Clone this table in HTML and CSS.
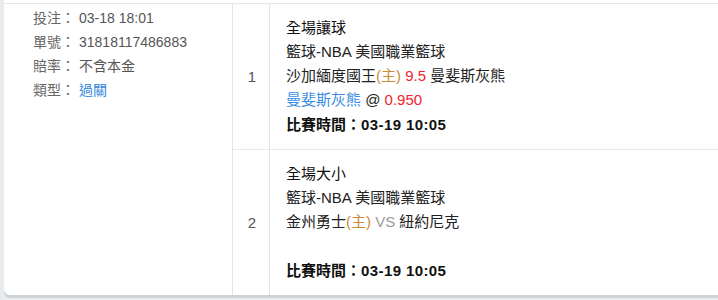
FILE: index.html
```html
<!DOCTYPE html>
<html lang="zh-Hant">
<head>
<meta charset="utf-8">
<link rel="stylesheet" href="styles.css">
</head>
<body>
<div class="card">
  <div class="inner">
    <div class="info">
      <div class="info-row"><span class="label">投注：</span><span class="value">03-18 18:01</span></div>
      <div class="info-row"><span class="label">單號：</span><span class="value">31818117486883</span></div>
      <div class="info-row"><span class="label">賠率：</span><span class="value">不含本金</span></div>
      <div class="info-row"><span class="label">類型：</span><span class="value link">過關</span></div>
    </div>
    <div class="bets">
      <div class="bet">
        <div class="idx">1</div>
        <div class="detail">
          <div class="line title">全場讓球</div>
          <div class="line">籃球-NBA 美國職業籃球</div>
          <div class="line">沙加緬度國王<span class="home">(主)</span> <span class="red">9.5</span> 曼斐斯灰熊</div>
          <div class="line"><span class="blue">曼斐斯灰熊</span> @ <span class="red">0.950</span></div>
          <div class="line time">比賽時間：<span class="num">03-19 10:05</span></div>
        </div>
      </div>
      <div class="bet">
        <div class="idx">2</div>
        <div class="detail">
          <div class="line title">全場大小</div>
          <div class="line">籃球-NBA 美國職業籃球</div>
          <div class="line">金州勇士<span class="home">(主)</span> <span class="vs">VS</span> 紐約尼克</div>
          <div class="line"></div>
          <div class="line time">比賽時間：<span class="num">03-19 10:05</span></div>
        </div>
      </div>
    </div>
  </div>
</div>
</body>
</html>
```

FILE: styles.css
```css
html, body {
  margin: 0;
  padding: 0;
}
body {
  background: #e9ecef;
  font-family: "Liberation Sans", "Noto Sans CJK TC", sans-serif;
  height: 300px;
  overflow: hidden;
}
.card {
  margin-left: 4px;
  padding-top: 3px;
  background: #fff;
  border-bottom-left-radius: 6px;
  box-shadow: 0 3px 0 #cdd3d9;
}
.inner {
  display: flex;
  border-top: 1px solid #e6e8eb;
}
.info {
  width: 229px;
  box-sizing: border-box;
  border-right: 1px solid #e4e4e4;
  padding: 2px 0 0 29px;
  font-size: 14px;
  line-height: 24px;
}
.info-row {
  display: flex;
}
.label {
  width: 46px;
  color: #666;
}
.value {
  color: #555;
}
.link {
  color: #2f86dc;
}
.bets {
  flex: 1;
  display: flex;
  flex-direction: column;
}
.bet {
  display: flex;
  border-bottom: 1px solid #e6e9ee;
}
.bet:last-child {
  border-bottom: none;
}
.idx {
  width: 37px;
  box-sizing: border-box;
  border-right: 1px solid #e4e4e4;
  display: flex;
  align-items: center;
  justify-content: center;
  padding-left: 2px;
  font-size: 15px;
  color: #555;
}
.detail {
  padding: 12px 0 12px 16px;
  font-size: 15px;
  line-height: 24px;
  color: #222;
}
.line {
  height: 24px;
  white-space: nowrap;
}
.title {
  color: #111;
}
.time {
  margin-top: 1px;
  font-weight: bold;
  color: #111;
}
.num {
  letter-spacing: 0.4px;
}
.home {
  color: #c98a3c;
}
.red {
  color: #f5222d;
}
.blue {
  color: #3c8ee5;
}
.vs {
  color: #999;
}
```
